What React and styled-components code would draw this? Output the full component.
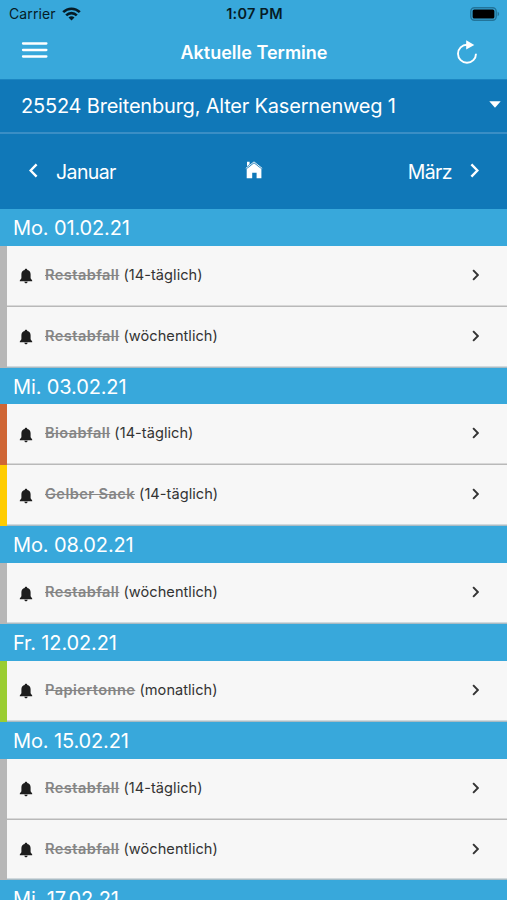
import React from "react";
import styled, { createGlobalStyle } from "styled-components";

const days = [
  {
    date: "Mo. 01.02.21",
    items: [
      { name: "Restabfall", rhythm: "14-täglich", color: "#b7b7b7" },
      { name: "Restabfall", rhythm: "wöchentlich", color: "#b7b7b7" },
    ],
  },
  {
    date: "Mi. 03.02.21",
    items: [
      { name: "Bioabfall", rhythm: "14-täglich", color: "#cf6635" },
      { name: "Gelber Sack", rhythm: "14-täglich", color: "#ffcc00" },
    ],
  },
  {
    date: "Mo. 08.02.21",
    items: [{ name: "Restabfall", rhythm: "wöchentlich", color: "#b7b7b7" }],
  },
  {
    date: "Fr. 12.02.21",
    items: [{ name: "Papiertonne", rhythm: "monatlich", color: "#9acd32" }],
  },
  {
    date: "Mo. 15.02.21",
    items: [
      { name: "Restabfall", rhythm: "14-täglich", color: "#b7b7b7" },
      { name: "Restabfall", rhythm: "wöchentlich", color: "#b7b7b7" },
    ],
  },
  { date: "Mi. 17.02.21", items: [] },
];

const Chevron = ({ left, size, weight }) => (
  <svg width={size * 0.6} height={size} viewBox="0 0 9 15">
    <path
      d={left ? "M7.6 1.3 1.6 7.5l6 6.2" : "M1.4 1.3l6 6.2-6 6.2"}
      fill="none"
      stroke="currentColor"
      strokeWidth={weight}
    />
  </svg>
);

const Bell = () => (
  <svg width="14" height="16" viewBox="0 0 14 16">
    <path
      d="M7 .8c.8 0 1.3.5 1.3 1.2C10.5 2.5 11.6 4.1 11.6 6.3v4l1.6 2.1v.9H.8v-.9l1.6-2.1v-4c0-2.200 1.100-3.800 3.300-4.300C5.700 1.300 6.200.8 7 .8zM5.300 13.700h3.400c-.1.9-.8 1.500-1.700 1.500s-1.600-.6-1.700-1.500z"
      fill="#1d1d1d"
    />
  </svg>
);

const App = () => {
  return (
    <Screen>
      <GlobalStyle />
      <StatusBar>
        <Carrier>
          <span>Carrier</span>
          <svg width="19" height="14" viewBox="0 0 19 14">
            <g fill="none" stroke="#061c26" strokeWidth="2.6">
              <path d="M1.2 5.2c4.7-4.7 11.9-4.7 16.6 0" />
              <path d="M4.2 8.4c3-3 7.6-3 10.6 0" />
            </g>
            <path d="M6.5 10.5c1.7-1.6 4.3-1.6 6 0l-3 3z" fill="#061c26" />
          </svg>
        </Carrier>
        <Clock>1:07 PM</Clock>
        <Battery>
          <svg width="30" height="14" viewBox="0 0 30 14">
            <rect x=".8" y=".8" width="25.4" height="12.4" rx="3.6" fill="none" stroke="#22749a" strokeWidth="1.4" />
            <rect x="2.6" y="2.4" width="21.8" height="9.2" rx="1.6" fill="#000" />
            <path d="M27.6 4.8c2 .7 2 3.700 0 4.400z" fill="#22749a" />
          </svg>
        </Battery>
      </StatusBar>
      <TitleBar>
        <MenuButton>
          <svg width="27" height="18" viewBox="0 0 27 18">
            <path
              d="M2 2.500h23.400M2 9h23.400M2 15.500h23.400"
              stroke="#fff"
              strokeWidth="2.300"
              strokeLinecap="round"
            />
          </svg>
        </MenuButton>
        <Title>Aktuelle Termine</Title>
        <svg width="22" height="24" viewBox="0 0 22 24">
          <path d="M11 4.800a9 9 0 1 0 9 9" fill="none" stroke="#fff" strokeWidth="1.900" />
          <path d="M10.200.3 18.300 4.900l-8.100 4.700z" fill="#fff" />
        </svg>
      </TitleBar>
      <Address>
        <span>25524 Breitenburg, Alter Kasernenweg 1</span>
        <svg width="12" height="10" viewBox="0 0 12 10">
          <path d="M.3.3h11.400L6 6.800z" fill="#fff" />
        </svg>
      </Address>
      <MonthNav>
        <Month>
          <Chevron left size={15} weight={2.4} />
          <span>Januar</span>
        </Month>
        <HomeIcon width="18" height="18" viewBox="0 0 18 18">
          <path d="M.8 7.400 9 .9l8.200 6.500" fill="none" stroke="#fff" strokeWidth=".9" />
          <path d="M2 .8h2.600v2.400L2 5.200zM9 2.200l7.400 5.900v9.100h-4.800v-5.400H7.200v5.400H1.700V8.100z" fill="#fff" />
        </HomeIcon>
        <Month $next>
          <span>März</span>
          <Chevron size={15} weight={2.4} />
        </Month>
      </MonthNav>
      {days.map((day) => (
        <section key={day.date}>
          <DateHeader>{day.date}</DateHeader>
          {day.items.map((item, i) => (
            <Row key={i} $color={item.color} $last={i === day.items.length - 1}>
              <Bell />
              <Label>
                <Name>{item.name}</Name> ({item.rhythm})
              </Label>
              <Chevron size={12} weight={2.4} />
            </Row>
          ))}
        </section>
      ))}
    </Screen>
  );
};

const GlobalStyle = createGlobalStyle`
  * {
    box-sizing: border-box;
  }

  body {
    margin: 0;
    overflow: hidden;
  }

  svg {
    display: block;
    flex: none;
  }
`;

const Screen = styled.div`
  width: 507px;
  height: 900px;
  overflow: hidden;
  background: #f7f7f7;
  color: #fff;
  font-family: Inter, "Liberation Sans", sans-serif;
`;

const StatusBar = styled.div`
  height: 27px;
  padding: 0 7px 0 9px;
  background: #38a8db;
  color: #061c26;
  font-size: 14px;

  display: grid;
  grid-template-columns: 1fr auto 1fr;
  align-items: center;
`;

const Carrier = styled.div`
  display: flex;
  align-items: center;
  gap: 6px;
  letter-spacing: 0.1px;
`;

const Clock = styled.div`
  font-size: 14.5px;
  font-weight: 600;
  letter-spacing: 0.25px;
`;

const Battery = styled.div`
  display: flex;
  justify-content: flex-end;
`;

const TitleBar = styled.header`
  height: 52px;
  padding: 0 29px 3px 21px;
  background: #38a8db;

  display: flex;
  align-items: center;
  justify-content: space-between;
`;

const MenuButton = styled.div`
  padding-bottom: 4px;
`;

const Title = styled.h1`
  margin: 0;
  padding: 2px 0 0 4px;
  font-size: 18px;
  font-weight: 600;
`;

const Address = styled.div`
  height: 55px;
  padding: 0 6px 0 21px;
  border-top: 1px solid #1b86c2;
  border-bottom: 2px solid #3a8ec5;
  background: #1078b8;
  font-size: 20px;
  letter-spacing: -0.2px;

  display: flex;
  align-items: center;
  justify-content: space-between;
`;

const MonthNav = styled.nav`
  height: 75px;
  padding: 0 28px 0 29px;
  background: #1078b8;
  font-size: 19.5px;
  letter-spacing: -0.6px;

  display: grid;
  grid-template-columns: 1fr auto 1fr;
  align-items: center;
`;

const HomeIcon = styled.svg`
  margin-bottom: 3px;
`;

const Month = styled.div`
  display: flex;
  align-items: center;
  justify-content: ${(props) => (props.$next ? "flex-end" : "flex-start")};
  gap: 18px;

  svg {
    margin-bottom: 2px;
  }
`;

const DateHeader = styled.h2`
  height: 36.8px;
  margin: 0;
  padding-left: 13px;
  background: #38a8db;
  font-size: 20px;
  font-weight: 400;
  letter-spacing: -0.13px;
  line-height: 38px;
`;

const Row = styled.div`
  height: 60.95px;
  padding: 0 28px 3px 12px;
  border-left: 7px solid ${(props) => props.$color};
  box-shadow: inset 0 -1.5px 0 ${(props) => (props.$last ? "#a9bbc4" : "#b9b9b9")};
  background: #f7f7f7;
  color: #333;

  display: flex;
  align-items: center;

  svg:first-child {
    margin-top: 3px;
  }
`;

const Label = styled.div`
  flex: 1;
  padding-left: 12px;
  font-size: 14.6px;
  letter-spacing: 0.03px;
`;

const Name = styled.span`
  color: #858585;
  font-weight: 600;
  letter-spacing: 0.42px;
  text-decoration: line-through;
`;

export default App;
